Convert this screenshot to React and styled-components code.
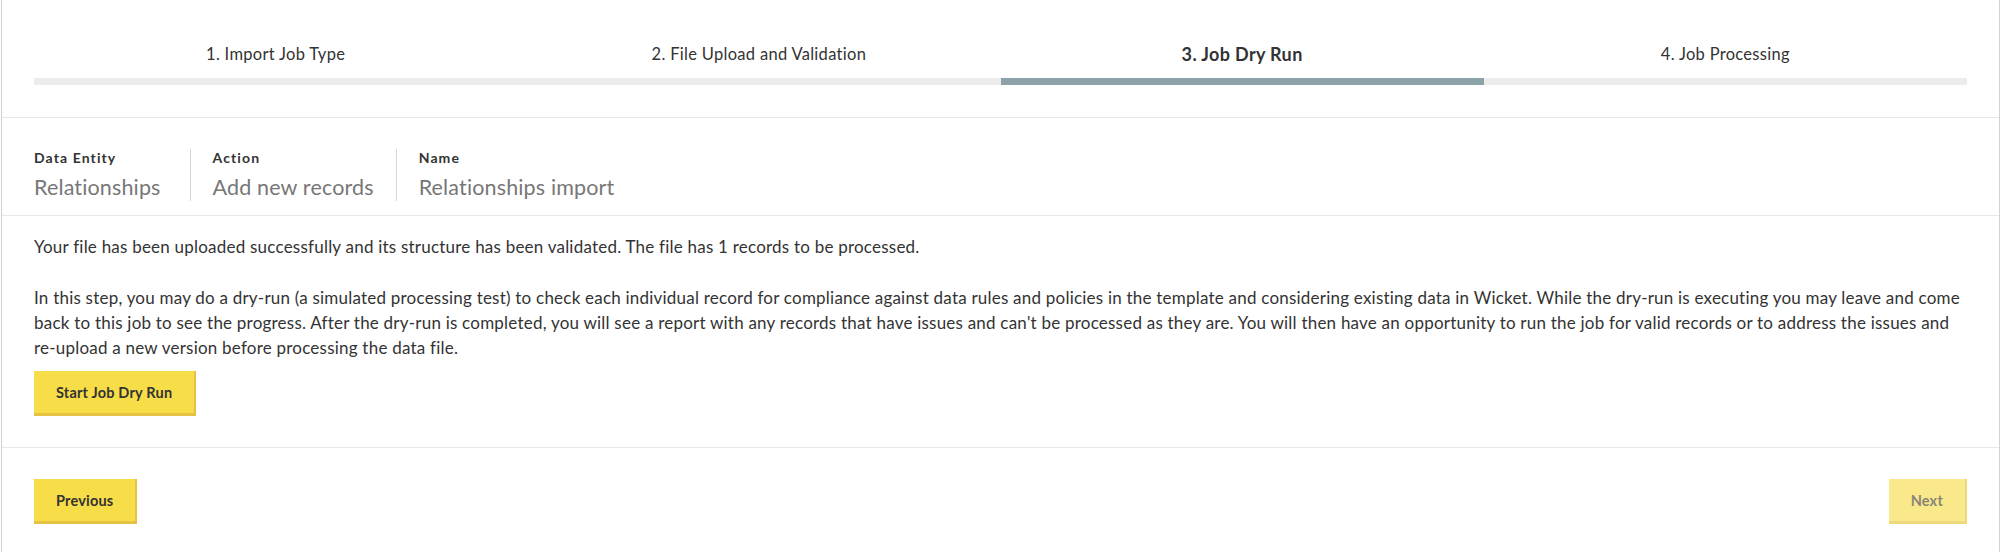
import React from 'react';
import styled, {createGlobalStyle} from 'styled-components';

const steps = [
  '1. Import Job Type',
  '2. File Upload and Validation',
  '3. Job Dry Run',
  '4. Job Processing',
];

const info = [
  {label: 'Data Entity', value: 'Relationships'},
  {label: 'Action', value: 'Add new records'},
  {label: 'Name', value: 'Relationships import'},
];

function App() {
  const current = 2;

  return (
    <Card>
      <GlobalStyle />
      <Stepper>
        {steps.map((s, i) => (
          <Step key={i}>
            <StepLabel active={i === current}>{s}</StepLabel>
            <StepBar active={i === current} />
          </Step>
        ))}
      </Stepper>

      <InfoRow>
        {info.map((d, i) => (
          <InfoItem key={i} first={i === 0}>
            <InfoLabel>{d.label}</InfoLabel>
            <InfoValue>{d.value}</InfoValue>
          </InfoItem>
        ))}
      </InfoRow>

      <Body>
        <Text>Your file has been uploaded successfully and its structure has been validated. The file has 1 records to be processed.</Text>
        <Text>
          In this step, you may do a dry-run (a simulated processing test) to check each individual record for compliance against data rules and policies in the template and considering existing data in Wicket. While the dry-run is executing you may leave and come back to this job to see the progress. After the dry-run is completed, you will see a report with any records that have issues and can't be processed as they are. You will then have an opportunity to run the job for valid records or to address the issues and re-upload a new version before processing the data file.
        </Text>
        <Button>Start Job Dry Run</Button>
      </Body>

      <Footer>
        <Button>Previous</Button>
        <Button disabled>Next</Button>
      </Footer>
    </Card>
  );
}

export default App;

const GlobalStyle = createGlobalStyle`
body {
  margin: 0;
  background: #fff;
  font-family: "Lato", "Liberation Sans", sans-serif;
  color: #333;
}
`

const Card = styled.div`
margin: 0 1px;
min-height: 552px;
border-left: 1px solid #d2d2d2;
border-right: 1px solid #d2d2d2;
background: #fff;
`

const Stepper = styled.div`
display: grid;
grid-template-columns: repeat(4, 1fr);
padding: 44px 32px 32px;
border-bottom: 1px solid #e8e8e8;
`

const Step = styled.div`
display: flex;
flex-direction: column;
align-items: stretch;
`

const StepLabel = styled.div`
height: 20px;
line-height: 20px;
margin-bottom: 14px;
text-align: center;
font-size: ${p => (p.active ? '18px' : '16.5px')};
font-weight: ${p => (p.active ? 700 : 400)};
letter-spacing: ${p => (p.active ? '0.35px' : '0.3px')};
color: #333;
`

const StepBar = styled.div`
height: 7px;
background: ${p => (p.active ? '#8aa2a8' : '#ececec')};
`

const InfoRow = styled.div`
display: flex;
padding: 31px 32px 14px;
border-bottom: 1px solid #e8e8e8;
`

const InfoItem = styled.div`
display: flex;
flex-direction: column;
padding: 0 22px 0 ${p => (p.first ? '0' : '22px')};
border-left: ${p => (p.first ? 'none' : '1px solid #d6d6d6')};
&:first-child {
  padding-right: 29px;
}
`

const InfoLabel = styled.div`
font-size: 14px;
line-height: 18px;
font-weight: 700;
letter-spacing: 1.1px;
color: #333;
margin-bottom: 6px;
`

const InfoValue = styled.div`
font-size: 21.5px;
line-height: 28px;
letter-spacing: 0.15px;
color: #777;
`

const Body = styled.div`
padding: 18px 32px 31px;
border-bottom: 1px solid #e8e8e8;
`

const Text = styled.p`
margin: 0 0 26px;
font-size: 17px;
line-height: 25px;
letter-spacing: 0.22px;
color: #333;
&:last-of-type {
  margin-bottom: 11px;
}
`

const Button = styled.button`
height: 45px;
padding: 0 22px;
border: none;
border-right: 2px solid ${p => (p.disabled ? '#eed77e' : '#e6c143')};
border-bottom: 3px solid ${p => (p.disabled ? '#eed77e' : '#e6c143')};
border-radius: 0;
background: ${p => (p.disabled ? '#f9e98b' : '#f7dd48')};
color: ${p => (p.disabled ? '#8a8677' : '#333')};
font-family: "Lato", "Liberation Sans", sans-serif;
font-size: 14.5px;
font-weight: 700;
letter-spacing: 0.2px;
cursor: ${p => (p.disabled ? 'default' : 'pointer')};
`

const Footer = styled.div`
display: flex;
justify-content: space-between;
padding: 31px 32px 29px;
`
